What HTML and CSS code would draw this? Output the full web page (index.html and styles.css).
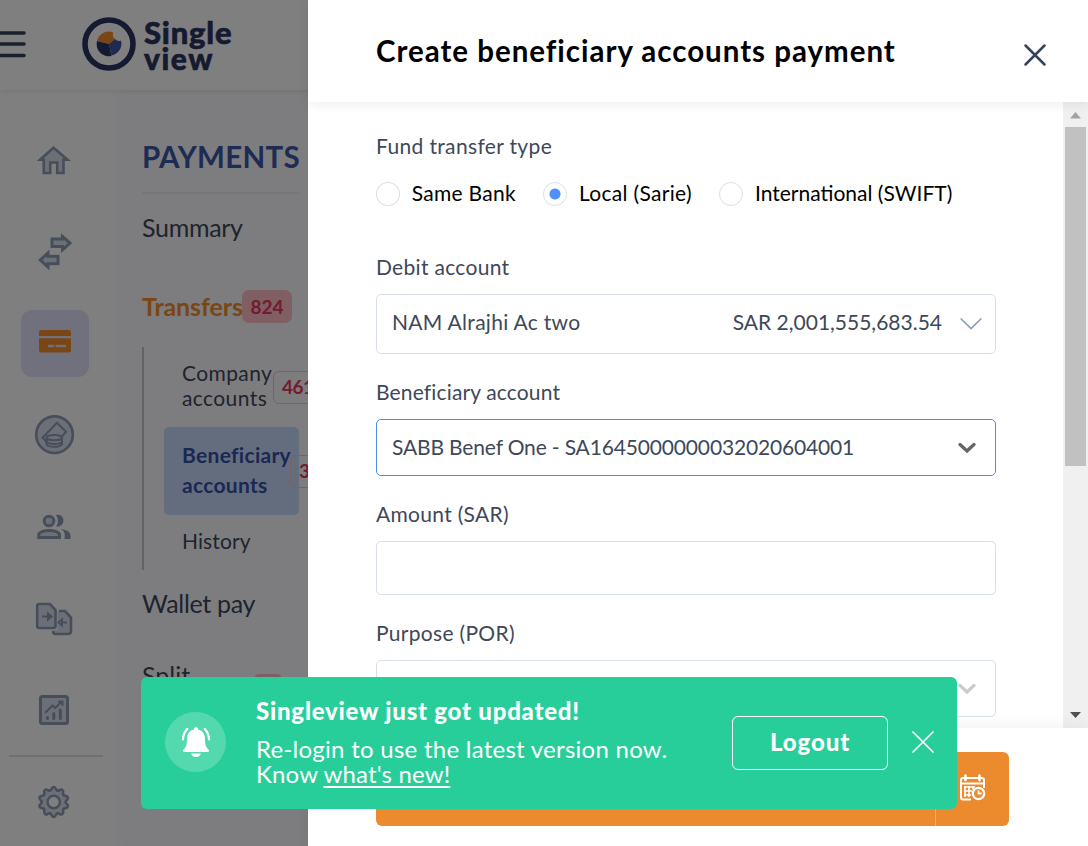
FILE: index.html
```html
<!DOCTYPE html>
<html lang="en">
<head>
<meta charset="utf-8">
<title>Singleview</title>
<link rel="stylesheet" href="styles.css">
</head>
<body>
<div class="app">
  <header class="topbar">
    <svg class="burger" width="26" height="30" viewBox="0 0 26 30"><path d="M-2 3H24M-2 14H24M-2 25.500H24" stroke="#34425a" stroke-width="3.600" stroke-linecap="round"/></svg>
    <div class="logo">
      <svg width="54" height="54" viewBox="0 0 54 54"><circle cx="27" cy="27" r="24" fill="none" stroke="#2c3462" stroke-width="5.600"/><path d="M27 27L15 23.700A12.200 12.200 0 0 1 31 15.300Q30 20 33 22Z" fill="#f28c28"/><path d="M27 27L33 22Q36 25 39 23.500A12 12 0 0 1 29.500 38.500Z" fill="#3c54a0"/><path d="M27 27L29.500 39A12.200 12.200 0 0 1 15 24Z" fill="#2c3462"/></svg>
      <div class="logo-name"><span class="logo-a">Single</span><span class="logo-b">view</span></div>
    </div>
  </header>
  <div class="main">
    <nav class="rail">
      <svg class="rail-item" viewBox="0 0 68 68"><path d="M20 32.800L33.500 20.700L47.500 32.800H43.500V46H37.200V35.500H30.200V46H23.800V32.800Z" class="duo w26"/></svg>
      <svg class="rail-item" viewBox="0 0 68 68"><path d="M32 20H42.500V17.500L50 24L42.500 30.800V27.500H32Z" class="duo w3"/><path d="M38 37.200H28V34L20.300 41L28 48V44.800H38Z" class="duo w3"/></svg>
      <svg class="rail-item rail-active" viewBox="1 .5 68 67"><path d="M19 26.500V23Q19 20.500 21.500 20.500H48.500Q51 20.500 51 23V26.500ZM19 28.800H51V40.500Q51 43 48.500 43H21.500Q19 43 19 40.500Z" fill="#f28c28"/><path d="M28 36.500H34M35.500 36.500H46" stroke="#dcdcf8" stroke-width="2.400"/></svg>
      <svg class="rail-item" viewBox="0 1.800 68 68"><circle cx="34.500" cy="34.500" r="18.300" class="duo w26"/><path d="M27 42L22.500 37.500L37 22.500L46 31.500L41.500 37" class="line w2"/><path d="M26.500 38V44C28 47.500 40 47.500 42 44V38" class="duo w2"/><ellipse cx="34.200" cy="37.500" rx="7.800" ry="2.600" class="duo w2"/><path d="M26.500 41.500C29 44.500 40 44.500 42 41.500" class="line w2"/></svg>
      <svg class="rail-item" viewBox="0 0 68 68"><circle cx="29" cy="28" r="4.800" class="duo w3"/><path d="M18.700 44.500V42C18.700 36 39.500 36 39.500 42V44.500Z" class="duo w3"/><path d="M36 22C46 20 46 35 36 33.500Q40 28 36 22ZM41 36C48 37 50.500 39.500 50.500 43V46H44.500C45.500 40 44 38 41 36Z" fill="#8e9cb4"/></svg>
      <svg class="rail-item" viewBox="0 0 68 68"><path d="M38.500 26H45L51 32.500V46Q51 49 48 49H35Q33 49 33 46V45H37.500V26Z" fill="#d8dfec"/><path d="M39 26H45L51 32.500V46Q51 49 48 49H35.500Q33 49 33 46" class="line w26"/><path d="M30 19H19Q17.200 19 17.200 21V41Q17.200 43 19 43H33.500Q35.500 43 35.500 41V25Z" class="duo w26"/><path d="M22 31.500H30M28 28.500L31.500 31.500L28 34.500ZM47 37.500H41M42 34.500L38.500 37.500L42 40.500Z" class="line w2"/></svg>
      <svg class="rail-item" viewBox="0 0 68 68"><rect x="20.500" y="20.500" width="27" height="27" rx="2" class="duo w3"/><path d="M25 37L32.500 29.500L35 32L41.500 26M38 25.500H42.500V30" class="line w2"/><path d="M27.500 41.500V42.500M33.800 37.500V42.500M40.300 34V42.500" class="line w3" stroke-linecap="round"/></svg>
      <hr class="rail-rule">
      <svg class="rail-item gear" viewBox="0 0 68 68">
        <defs><path id="tooth" d="M-3.700 -11.400C-1.500 -11.800 -2.800 -14.900 0 -14.900S1.500 -11.800 3.700 -11.400L0 0Z"/><path id="rim" d="M-3.700 -11.400C-1.500 -11.800 -2.800 -14.900 0 -14.900S1.500 -11.800 3.700 -11.400" stroke-linecap="round"/></defs>
        <g transform="translate(33.700 34)">
          <g fill="#d8dfec"><use href="#tooth"/><use href="#tooth" transform="rotate(36)"/><use href="#tooth" transform="rotate(72)"/><use href="#tooth" transform="rotate(108)"/><use href="#tooth" transform="rotate(144)"/><use href="#tooth" transform="rotate(180)"/><use href="#tooth" transform="rotate(216)"/><use href="#tooth" transform="rotate(252)"/><use href="#tooth" transform="rotate(288)"/><use href="#tooth" transform="rotate(324)"/></g>
          <g class="line w26"><use href="#rim"/><use href="#rim" transform="rotate(36)"/><use href="#rim" transform="rotate(72)"/><use href="#rim" transform="rotate(108)"/><use href="#rim" transform="rotate(144)"/><use href="#rim" transform="rotate(180)"/><use href="#rim" transform="rotate(216)"/><use href="#rim" transform="rotate(252)"/><use href="#rim" transform="rotate(288)"/><use href="#rim" transform="rotate(324)"/></g>
          <circle r="6.200" class="hole"/>
        </g>
      </svg>
    </nav>
    <aside class="menu">
      <h2 class="menu-title">PAYMENTS</h2>
      <div class="menu-link summary">Summary</div>
      <div class="menu-link transfers"><span class="transfer-text">Transfers</span><span class="count">824</span></div>
      <div class="tree">
        <div class="tree-item company">Company<br>accounts<span class="tag">461</span></div>
        <div class="tree-item selected"><span class="ben">Beneficiary</span><br>accounts<span class="tag">363</span></div>
        <div class="tree-item history">History</div>
      </div>
      <div class="menu-link wallet">Wallet pay</div>
      <div class="menu-link split">Split<span class="mini"></span></div>
    </aside>
  </div>
</div>
<div class="backdrop"></div>

<section class="drawer">
  <header class="drawer-head">
    <h1>Create beneficiary accounts payment</h1>
    <svg width="24" height="24" viewBox="0 0 24 24"><path d="M2.500 2.500L21.500 21.500M21.500 2.500L2.500 21.500" stroke="#34425a" stroke-width="2.500" stroke-linecap="round"/></svg>
  </header>
  <div class="drawer-body">
    <form class="form">
      <div class="label fund">Fund transfer type</div>
      <div class="radios">
        <div class="radio r1"><i></i><span>Same Bank</span></div>
        <div class="radio r2 on"><i></i><span>Local (Sarie)</span></div>
        <div class="radio r3"><i></i><span>International (SWIFT)</span></div>
      </div>
      <div class="field">
        <div class="label">Debit account</div>
        <div class="control debit"><span class="nam">NAM Alrajhi Ac two</span><span class="amount">SAR 2,001,555,683.54</span><svg width="22" height="14" viewBox="0 0 22 14"><path d="M1.200 2L11 11.500L20.800 2" fill="none" stroke="#919db4" stroke-width="1.700" stroke-linecap="round"/></svg></div>
      </div>
      <div class="field">
        <div class="label benef">Beneficiary account</div>
        <div class="control focus"><span class="sabb">SABB Benef One - SA1645000000032020604001</span><svg class="chev" width="18" height="12" viewBox="0 0 18 12"><path d="M2 2.500L9 9L16 2.500" fill="none" stroke="#666" stroke-width="3.300" stroke-linecap="round"/></svg></div>
      </div>
      <div class="field">
        <div class="label">Amount (SAR)</div>
        <div class="control short"></div>
      </div>
      <div class="field">
        <div class="label">Purpose (POR)</div>
        <div class="control purpose"><span></span><svg class="chev" width="18" height="12" viewBox="0 0 18 12"><path d="M2 2.500L9 9L16 2.500" fill="none" stroke="#ccc" stroke-width="3.300" stroke-linecap="round"/></svg></div>
      </div>
    </form>
    <div class="scrollbar">
      <svg width="25" height="25" viewBox="0 0 25 25"><path d="M12.500 10L18 16.500H7Z" fill="#a3a3a3"/></svg>
      <div class="thumb"></div>
      <svg class="down" width="25" height="25" viewBox="0 0 25 25"><path d="M7 9H18L12.500 15Z" fill="#505050"/></svg>
    </div>
  </div>
  <footer class="drawer-foot">
    <div class="submit"><div class="submit-main"></div><div class="submit-later">
      <svg width="28" height="28" viewBox="0 0 28 28" fill="none" stroke="#fff"><path d="M12 25.500H4Q2 25.500 2 23V6Q2 4 4 4H23Q25 4 25 6V14M2 9.500H25" stroke-width="2"/><path d="M6.500 1.500V6M20.500 1.500V6" stroke-width="2.600" stroke-linecap="round"/><path d="M5 13H16M5 17H13M5 21H12M6 12V23M10 12V23M14 12V15.500" stroke-width="1.700"/><circle cx="19.500" cy="19.500" r="5.700" stroke-width="2.300"/><path d="M19.500 16.500V19.500H22.500" stroke-width="1.800"/></svg>
    </div></div>
  </footer>
</section>

<div class="toast">
  <div class="bell"><svg width="30" height="32" viewBox="0 0 30 32"><path d="M15 1Q17 1 17 3.500C22 4.500 24 8.500 24 13C24 19 25 21.500 27.500 23.500Q29 26 26 26H4Q1 26 2.500 23.500C5 21.500 6 19 6 13C6 8.500 8 4.500 13 3.500Q13 1 15 1ZM10 27.500H20Q18.500 31 15 31Q11.500 31 10 27.500Z" fill="#fff"/><path d="M6.300 3Q2.200 7 2 13.500M23.700 3Q27.800 7 28 13.500" fill="none" stroke="#fff" stroke-width="2.200" stroke-linecap="round"/></svg></div>
  <div class="toast-text">
    <strong>Singleview just got updated!</strong>
    <span class="relogin">Re-login to use the latest version now.</span>
    <span class="know">Know <u>what's new!</u></span>
  </div>
  <div class="logout">Logout</div>
  <svg class="toast-x" width="24" height="24" viewBox="0 0 24 24"><path d="M2 2L22 22M22 2L2 22" stroke="#fff" stroke-width="1.700" stroke-linecap="round"/></svg>
</div>
</body>
</html>
```
FILE: styles.css
```css
* { box-sizing: border-box; }
body {
  margin: 0; width: 1088px; height: 846px; overflow: hidden; position: relative;
  font-family: Lato, "Liberation Sans", sans-serif; color: #3e4858; background: #fff;
}
svg { display: block; flex: none; }

.app { width: 1088px; height: 846px; overflow: hidden; isolation: isolate; }
.topbar { height: 90px; display: flex; background: #fff; box-shadow: 0 0 6px rgba(20, 30, 60, .14); position: relative; z-index: 1; }
.burger { margin-top: 30px; }
.logo { display: flex; margin: 17px 0 0 56px; }
.logo-name { display: flex; flex-direction: column; margin: 2px 0 0 8px; font-weight: 900; color: #2c3462; -webkit-text-stroke: .6px #2c3462; }
.logo-a { font-size: 31px; line-height: 27px; letter-spacing: .8px; }
.logo-b { font-size: 30px; line-height: 25px; letter-spacing: 1.500px; }
.main { display: flex; height: 756px; }
.rail { width: 124px; background: linear-gradient(90deg, #fff 88%, #fafbff); padding: 37px 0 0 20px; }
.rail-item { width: 68px; height: 68px; margin-bottom: 23.500px; }
.rail-active { background: #e2e2fa; border-radius: 11px; margin-left: 1px; height: 67px; margin-bottom: 24.500px; }
.rail-rule { width: 94px; height: 2px; border: 0; background: #dfe1e6; margin: -12.500px 0 11px -11px; }
.gear { margin: 0; }
.duo { fill: #d8dfec; stroke: #8e9cb4; stroke-width: 2; }
.line { fill: none; stroke: #8e9cb4; stroke-width: 2.600; }
.w2 { stroke-width: 2; }
.w26 { stroke-width: 2.600; }
.w3 { stroke-width: 3; }
.hole { fill: #fff; stroke: #8e9cb4; stroke-width: 2.400; }

.menu { flex: 1; background: #fafbff; padding: 0 0 0 18px; display: flex; flex-direction: column; }
.menu-title { margin: 48px 0 0; width: 158px; height: 56px; border-bottom: 2px solid #eceef3; font-size: 29.500px; line-height: 37px; letter-spacing: .3px; font-weight: 700; color: #3c58a8; white-space: nowrap; }
.menu-link { font-size: 25px; line-height: 30px; height: 32px; }
.summary { margin-top: 18px; letter-spacing: -.3px; }
.transfers { margin-top: 46px; display: flex; align-items: center; color: #f28c28; font-weight: 700; letter-spacing: -.1px; }
.transfer-text { width: 100px; }
.count { width: 50px; height: 33px; border-radius: 7px; background: #ffbcc8; color: #e9375c; font-size: 19px; line-height: 33px; text-align: center; }
.tree { width: 157px; height: 223px; margin-top: 25px; border-left: 2px solid #c5c6ca; padding-left: 20px; font-size: 21px; letter-spacing: .4px; }
.tree-item { position: relative; padding-left: 18px; white-space: nowrap; }
.company { padding-top: 13px; line-height: 25px; height: 80px; }
.selected { height: 88px; padding: 13px 0 0 18px; line-height: 29.500px; border-radius: 5px; background: #c8dafc; color: #3450a4; font-weight: 700; letter-spacing: .3px; }
.history { padding-top: 12px; line-height: 28px; letter-spacing: .1px; }
.tag { position: absolute; left: 109px; top: 24px; width: 54px; height: 33px; border: 1px solid #ffbcc8; border-radius: 6px; color: #e9375c; font-size: 19px; line-height: 30px; padding-left: 8px; letter-spacing: -.5px; font-weight: 700; }
.selected .tag { left: 126px; top: 28px; }
.wallet { margin-top: 18px; letter-spacing: -.3px; }
.split { margin-top: 40px; position: relative; }
.mini { position: absolute; left: 112px; top: 14px; width: 28px; height: 24px; border-radius: 5px; background: #ffbcc8; }
.backdrop { position: absolute; inset: 0; background: rgba(0, 0, 0, .5); }

.drawer { position: absolute; left: 308px; top: 0; width: 780px; height: 846px; background: #fff; display: flex; flex-direction: column; }
.drawer-head { height: 102px; padding: 32px 41px 0 68px; display: flex; justify-content: space-between; box-shadow: 0 2px 12px rgba(0, 0, 0, .08); position: relative; }
.drawer-head h1 { margin: 0; font-size: 29.500px; line-height: 38px; font-weight: 700; letter-spacing: .98px; color: #000; white-space: nowrap; }
.drawer-head svg { margin-top: 11px; }
.drawer-body { height: 626px; display: flex; justify-content: space-between; overflow: hidden; }
.form { width: 688px; padding: 32px 0 0 68px; }
.label { font-size: 21px; line-height: 24px; padding-bottom: 2px; letter-spacing: .3px; white-space: nowrap; }
.benef { letter-spacing: .15px; }
.fund { letter-spacing: .35px; }
.radios { display: flex; gap: 27px; margin: 22px 0 49px; font-size: 21px; line-height: 22px; color: #000; }
.radio { display: flex; gap: 12px; white-space: nowrap; }
.radio i { width: 24px; height: 24px; border: 1px solid #d9dfe8; border-radius: 50%; }
.r1 { width: 140px; letter-spacing: .3px; }
.r2 { width: 149px; letter-spacing: .3px; }
.on i { background: radial-gradient(circle, #4f91fb 5px, transparent 6px); }
.field { margin-bottom: 26px; }
.control { margin-top: 13px; height: 57px; border: 1px solid #d9dfe8; border-radius: 5px; display: flex; align-items: center; justify-content: space-between; padding: 0 19px 0 15px; font-size: 21px; letter-spacing: .3px; white-space: nowrap; }
.control span { padding-bottom: 3px; }
.debit { height: 60px; padding-right: 13px; padding-bottom: 1px; }
.debit span { padding-bottom: 5px; }
.amount { margin-left: auto; margin-right: 18px; letter-spacing: 0; }
.sabb { letter-spacing: -.16px; }
.focus { border-color: #4e8be8; }
.short { height: 54px; }
.scrollbar { width: 25px; background: #f0f0f0; display: flex; flex-direction: column; }
.thumb { width: 21px; height: 339px; background: #c1c1c1; margin-left: 2px; }
.down { margin-top: auto; }
.drawer-foot { height: 118px; background: #fff; padding: 24px 0 0 68px; box-shadow: 0 -2px 16px rgba(0, 0, 0, .06); position: relative; }
.submit { width: 633px; height: 74px; display: flex; border-radius: 6px; overflow: hidden; background: #eb8b2d; color: #fff; }
.submit-main { width: 560px; border-right: 1px solid #f3ae6c; }
.submit-later { padding: 22px 0 0 23px; }

.toast { position: absolute; left: 141px; top: 677px; width: 816px; height: 132px; border-radius: 6px; background: #28ce99; color: #fff; display: flex; padding-left: 24px; }
.bell { width: 61px; height: 60px; margin-top: 35px; border-radius: 50%; background: #54d9ae; display: flex; align-items: center; justify-content: center; }
.toast-text { width: 477px; margin: 18px 0 0 30px; display: flex; flex-direction: column; font-size: 24px; line-height: 25px; white-space: nowrap; }
.toast-text strong { line-height: 32px; margin-bottom: 9px; font-weight: 900; letter-spacing: .77px; }
.relogin { letter-spacing: .26px; }
.know { letter-spacing: .15px; }
.toast-text u { text-underline-offset: 3px; text-decoration-thickness: 2px; text-decoration-skip-ink: none; }
.logout { width: 156px; height: 54px; margin: 39px 23px 0 -1px; border: 1px solid #fff; border-radius: 6px; font-size: 24px; line-height: 50px; font-weight: 900; letter-spacing: .9px; text-align: center; }
.toast-x { margin-top: 53px; }
```
